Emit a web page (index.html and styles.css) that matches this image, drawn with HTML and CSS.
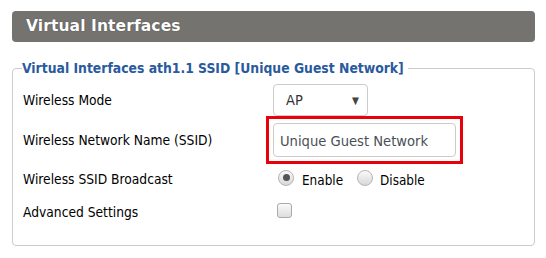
FILE: index.html
```html
<!DOCTYPE html>
<html lang="en">
<head>
    <meta charset="UTF-8">
    <title>Virtual Interfaces</title>
    <link rel="stylesheet" href="styles.css">
</head>
<body>
    <div class="panel">
        <div class="panel-title">Virtual Interfaces</div>
        <fieldset class="vif">
            <legend>Virtual Interfaces ath1.1 SSID [Unique Guest Network]</legend>
            <div class="row row-mode">
                <span class="label">Wireless Mode</span>
                <div class="select">
                    <span>AP</span>
                    <span class="arrow">&#9660;</span>
                </div>
            </div>
            <div class="row row-ssid">
                <span class="label">Wireless Network Name (SSID)</span>
                <div class="highlight">
                    <input type="text" value="Unique Guest Network">
                </div>
            </div>
            <div class="row row-bcast">
                <span class="label">Wireless SSID Broadcast</span>
                <div class="radios">
                    <span class="radio checked"></span><span class="opt">Enable</span>
                    <span class="radio"></span><span class="opt">Disable</span>
                </div>
            </div>
            <div class="row row-adv">
                <span class="label">Advanced Settings</span>
                <span class="checkbox"></span>
            </div>
        </fieldset>
    </div>
</body>
</html>
```

FILE: styles.css
```css
body {
    margin: 0;
    background-color: #fff;
    font-family: "DejaVu Sans Condensed", "DejaVu Sans", sans-serif;
    color: #000;
}

.panel {
    width: 523px;
    padding: 11px 0 0 12px;
}

.panel-title {
    height: 31px;
    box-sizing: border-box;
    background-color: #75736f;
    border-radius: 4px;
    color: #fff;
    font-family: "DejaVu Sans", sans-serif;
    font-weight: bold;
    font-size: 15.5px;
    letter-spacing: 0.1px;
    line-height: 31px;
    padding-left: 14px;
    text-shadow: 0 0 1px #333;
}

.vif {
    margin: 18px 0 0 0;
    padding: 8px 0 22px 10px;
    border: 1px solid #ccc;
    border-radius: 4px;
}

.vif legend {
    color: #2a5a9e;
    font-weight: bold;
    font-size: 13.8px;
    padding: 0 4px 0 0;
    margin-left: -1px;
}

.row {
    display: flex;
    align-items: center;
}

.label {
    width: 250px;
    font-size: 13.7px;
}

.row-mode {
    height: 32px;
}

.row-ssid {
    height: 34px;
    margin-top: 7px;
}

.row-bcast {
    height: 24px;
    margin-top: 10px;
}

.row-adv {
    height: 22px;
    margin-top: 10px;
}

.select {
    width: 95px;
    height: 32px;
    box-sizing: border-box;
    border: 1px solid #ccc;
    border-radius: 4px;
    display: flex;
    align-items: center;
    justify-content: space-between;
    padding: 0 8px 0 12px;
    font-size: 14.5px;
    color: #333;
}

.select .arrow {
    font-size: 10px;
    color: #444;
}

.highlight {
    outline: 3px solid #e8000b;
    outline-offset: 4px;
    display: flex;
}

.highlight input {
    width: 183px;
    height: 34px;
    box-sizing: border-box;
    border: 1px solid #ccc;
    border-radius: 4px;
    padding: 0 6px;
    font-family: inherit;
    font-size: 14.6px;
    color: #4a4f57;
    margin: 0;
}

.radios {
    display: flex;
    align-items: center;
    padding-left: 5px;
}

.radio {
    width: 16px;
    height: 16px;
    box-sizing: border-box;
    border: 1px solid #b5b5b5;
    border-radius: 50%;
    background: linear-gradient(#fafafa, #d8d8d8);
    display: flex;
    align-items: center;
    justify-content: center;
    margin-bottom: 3px;
}

.radio.checked::after {
    content: "";
    width: 7px;
    height: 7px;
    border-radius: 50%;
    background-color: #555;
}

.opt {
    font-size: 13.4px;
    margin: 3px 14px 0 8px;
}

.opt:last-child {
    margin-left: 7px;
}

.checkbox {
    width: 15px;
    height: 15px;
    box-sizing: border-box;
    border: 1px solid #aaa;
    border-radius: 3px;
    background: linear-gradient(#fafafa, #ddd);
    margin: 0 0 4px 4px;
}
```
